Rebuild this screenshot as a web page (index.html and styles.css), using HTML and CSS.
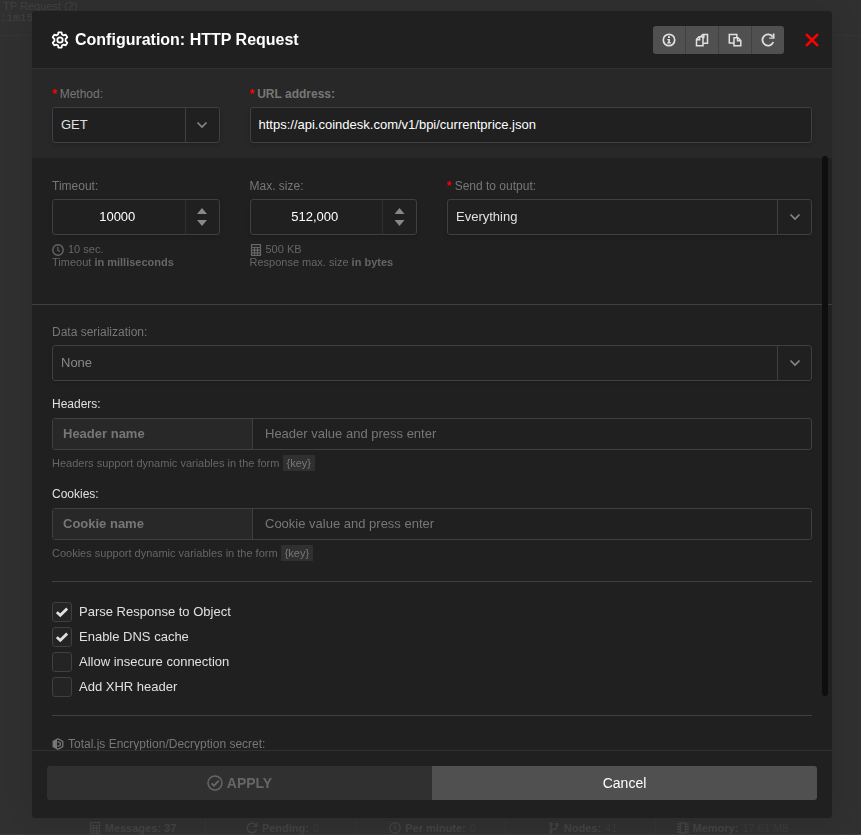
FILE: index.html
```html
<!DOCTYPE html>
<html lang="en">
<head>
<meta charset="utf-8">
<title>Configuration: HTTP Request</title>
<link rel="stylesheet" href="styles.css">
</head>
<body>
<svg class="symbols" aria-hidden="true">
  <symbol id="chevron" viewBox="0 0 12 12"><path d="M1.500 3.500 6 8l4.500-4.500" fill="none" stroke="currentColor" stroke-width="1.600"/></symbol>
  <symbol id="calc" viewBox="0 0 12 12"><path d="M1.500.600h9v10.800h-9zM2 3.500h8M2 6.200h8M2 8.800h8M4.500 4v7M7.500 4v7" fill="none" stroke="currentColor" stroke-width="1.200"/></symbol>
  <symbol id="clock" viewBox="0 0 12 12"><circle cx="6" cy="6" r="5.200" fill="none" stroke="currentColor" stroke-width="1.400"/><path d="M5.800 2.800V6.200l2 1.400" fill="none" stroke="currentColor" stroke-width="1.200"/></symbol>
  <symbol id="reload" viewBox="0 0 14 14"><path d="M11.700 3.800A5.600 5.600 0 1 0 12.300 9" fill="none" stroke="currentColor" stroke-width="1.800"/><path d="M13.500.500v5.300H8.300V4.500h3.500V.500z" fill="currentColor"/></symbol>
  <symbol id="tick" viewBox="0 0 12 12"><path d="M.800 6.200 4.300 9.300 11.200 2.600" fill="none" stroke="currentColor" stroke-width="2.800"/></symbol>
</svg>

<div class="workspace">
  <div class="flow">
    <div class="flow-name">TP Request (2)</div>
    <div class="flow-id">:im15x</div>
  </div>
  <footer class="status">
    <div><svg><use href="#calc"/></svg><b>Messages: 37</b></div>
    <div><svg><use href="#reload"/></svg><b>Pending:</b> <span>0</span></div>
    <div><svg><use href="#clock"/></svg><b>Per minute:</b> <span>0</span></div>
    <div><svg viewBox="0 0 12 12"><g fill="none" stroke="currentColor" stroke-width="1.500"><path d="M3 2.500v7M3 7.500h3c2 0 3-1 3-4"/><circle cx="3" cy="2" r="1"/><circle cx="3" cy="10" r="1"/><circle cx="9" cy="2.500" r="1"/></g></svg><b>Nodes:</b> <span>41</span></div>
    <div><svg viewBox="0 0 12 12"><path d="M3.500 1h5v10h-5zM0 2h3M0 4.700h3M0 7.300h3M0 10h3M9 2h3M9 4.700h3M9 7.300h3M9 10h3" fill="none" stroke="currentColor" stroke-width="1.500"/></svg><b>Memory:</b> <span>17.61 MB</span></div>
  </footer>
</div>

<div class="overlay">
<form class="modal">
  <header class="modal-head">
    <svg class="cog" viewBox="0 0 18 18" fill="none" stroke="currentColor"><path stroke-width="1.800" stroke-linejoin="round" d="M7.400 1.300h3.200l.400 2.200 1.600.900 2.100-.800 1.600 2.700-1.700 1.500v2.400l1.700 1.500-1.600 2.700-2.100-.800-1.600.900-.400 2.200H7.400L7 14.500l-1.600-.900-2.100.800-1.600-2.700 1.700-1.500V7.800L1.700 6.300l1.600-2.700 2.100.800L7 3.500z"/><circle cx="9" cy="9" r="2.700" stroke-width="1.800"/></svg>
    <h1>Configuration: HTTP Request</h1>
    <div class="tools">
      <button type="button" aria-label="Information"><svg viewBox="0 0 14 14"><circle cx="7" cy="7" r="5.700" fill="none" stroke="currentColor" stroke-width="1.700"/><path d="M6 3.300h2v1.700H6zM5.300 6h2.600v3.200h1v1.200H5.200V9.200h1V7.200h-.9z" fill="currentColor"/></svg></button>
      <button type="button" aria-label="Copy"><svg viewBox="0 0 14 14" fill="none" stroke="currentColor" stroke-width="1.500"><path d="M1.500 6.200 4 3.800h4v8.900H1.500z"/><path d="M4.600 4v2.700H1.700"/><path d="M5.700 3.600 7.800 1.500h4.700v8.700H8.200"/><path d="M8.800 1.700v2.800H7.500"/></svg></button>
      <button type="button" aria-label="Paste"><svg viewBox="0 0 14 14" fill="none" stroke="currentColor" stroke-width="1.500"><path d="M6 10H1.300V1.500h7.500V4"/><path d="M6 4.800h4L12.800 7.500v5.300H6z"/><path d="M9.500 4.800v3h3.300"/></svg></button>
      <button type="button" aria-label="Reload"><svg><use href="#reload"/></svg></button>
    </div>
    <button type="button" class="close" aria-label="Close"><svg viewBox="0 0 14 14"><path d="M1.800 1.800l10.400 10.400M12.200 1.800l-10.400 10.400" stroke="currentColor" stroke-width="2.600" stroke-linecap="round"/></svg></button>
  </header>

  <div class="modal-body">
    <section class="panel panel-top grid">
      <div class="field span3">
        <label class="required" for="method">Method:</label>
        <div class="box pick"><select id="method"><option>GET</option></select><span><svg><use href="#chevron"/></svg></span></div>
      </div>
      <div class="field span9">
        <label class="required strong" for="url">URL address:</label>
        <div class="box"><input id="url" type="text" value="https://api.coindesk.com/v1/bpi/currentprice.json"></div>
      </div>
    </section>

    <section class="panel panel-limits grid">
      <div class="field span3">
        <label for="timeout">Timeout:</label>
        <div class="box number"><input id="timeout" type="text" value="10000"><div class="steps"><button type="button" class="up" aria-label="Increase"></button><button type="button" class="down" aria-label="Decrease"></button></div></div>
        <div class="help"><svg><use href="#clock"/></svg>10 sec.<br>Timeout <b>in milliseconds</b></div>
      </div>
      <div class="field span3">
        <label for="size">Max. size:</label>
        <div class="box number"><input id="size" type="text" value="512,000"><div class="steps"><button type="button" class="up" aria-label="Increase"></button><button type="button" class="down" aria-label="Decrease"></button></div></div>
        <div class="help"><svg><use href="#calc"/></svg>500 KB<br>Response max. size <b>in bytes</b></div>
      </div>
      <div class="field span6">
        <label class="required" for="output">Send to output:</label>
        <div class="box pick"><select id="output"><option>Everything</option></select><span><svg><use href="#chevron"/></svg></span></div>
      </div>
    </section>

    <section class="panel panel-data">
      <div class="field">
        <label for="serial">Data serialization:</label>
        <div class="box pick muted"><select id="serial"><option>None</option></select><span><svg><use href="#chevron"/></svg></span></div>
      </div>
      <div class="pairs">
        <label for="hname">Headers:</label>
        <div class="pair"><input id="hname" type="text" placeholder="Header name"><input type="text" aria-label="Header value" placeholder="Header value and press enter"></div>
        <p>Headers support dynamic variables in the form <code>{key}</code></p>
      </div>
      <div class="pairs">
        <label for="cname">Cookies:</label>
        <div class="pair"><input id="cname" type="text" placeholder="Cookie name"><input type="text" aria-label="Cookie value" placeholder="Cookie value and press enter"></div>
        <p>Cookies support dynamic variables in the form <code>{key}</code></p>
      </div>
      <hr>
      <div class="checks">
        <label><input type="checkbox" checked><svg><use href="#tick"/></svg>Parse Response to Object</label>
        <label><input type="checkbox" checked><svg><use href="#tick"/></svg>Enable DNS cache</label>
        <label><input type="checkbox"><svg><use href="#tick"/></svg>Allow insecure connection</label>
        <label><input type="checkbox"><svg><use href="#tick"/></svg>Add XHR header</label>
      </div>
      <hr>
      <div class="field secret">
        <label for="secret"><svg viewBox="0 0 12 12"><path d="M6 .800 10.800 3.400v5.200L6 11.200 1.200 8.600V3.400z" fill="none" stroke="currentColor" stroke-width="1.300"/><path d="M1 3.400 5 1.200v9.600L1 8.600z" fill="currentColor"/><path d="M5.500 3.500 8.300 5v2L5.500 8.500" fill="none" stroke="currentColor" stroke-width="1.300"/></svg>Total.js Encryption/Decryption secret:</label>
        <div class="box"><input id="secret" type="text"></div>
      </div>
    </section>
    <div class="scrollbar"></div>
  </div>

  <footer class="modal-foot">
    <button type="submit" class="apply" disabled><svg viewBox="0 0 16 16" fill="none" stroke="currentColor" stroke-width="1.500"><circle cx="8" cy="8" r="7"/><path d="M4.500 8.300 7 10.700l4.800-5" stroke-width="1.800"/></svg>APPLY</button>
    <button type="button" class="cancel">Cancel</button>
  </footer>
</form>
</div>
</body>
</html>
```

FILE: styles.css
```css
* { box-sizing: border-box; }

html, body { height: 100%; }

body {
  margin: 0;
  background: #303030;
  color: #e0e0e0;
  font: 13px/16px "Liberation Sans", Arial, sans-serif;
  overflow: hidden;
}

h1, p { margin: 0; }

button, input, select {
  margin: 0;
  padding: 0;
  border: 0;
  border-radius: 0;
  background: none;
  color: inherit;
  font: inherit;
  outline: 0;
}

select { appearance: none; }

svg { width: 12px; height: 12px; flex: none; }

.symbols { position: absolute; width: 0; height: 0; }

/* Dimmed workspace behind the dialog */
.workspace {
  height: 100%;
  display: flex;
  flex-direction: column;
  justify-content: space-between;
  color: #424242;
  font-size: 11px;
  line-height: 14px;
}

.flow { height: 36px; border-bottom: 1px solid #343434; line-height: 12px; }
.flow-name { padding-left: 3px; }
.flow-id { font-family: "Liberation Mono", monospace; }

.status {
  display: flex;
  justify-content: center;
  border-bottom: 1px solid #3a3a3a;
}

.status div {
  width: 150px;
  height: 16px;
  display: flex;
  align-items: center;
  justify-content: center;
  gap: 4px;
  border-right: 1px solid #343434;
  padding: 3px 0 0 5px;
}

.status div:last-child { border: 0; }
.status span { color: #3a3a3a; }

/* Dialog */
.overlay {
  position: fixed;
  inset: 0;
  display: flex;
  padding: 11px 29px 17px 32px;
}

.modal {
  flex: 1;
  min-width: 0;
  display: flex;
  flex-direction: column;
  background: #202020;
  border-radius: 3px;
  overflow: hidden;
  box-shadow: 0 0 30px rgba(0, 0, 0, .1);
}

.modal-head {
  display: flex;
  align-items: center;
  height: 58px;
  padding: 0 12px 0 19px;
  border-bottom: 1px solid #303030;
  color: #fff;
}

.cog { width: 18px; height: 18px; margin-right: 6px; }

h1 { flex: 1; font-size: 16px; line-height: 20px; }

.tools {
  display: flex;
  border-radius: 3px;
  overflow: hidden;
  background: #505050;
  color: #e0e0e0;
}

.tools button {
  width: 33px;
  height: 28px;
  display: grid;
  place-items: center;
  border-right: 1px solid #404040;
}

.tools button:last-child { width: 32px; border: 0; }
.tools svg, .close svg { width: 14px; height: 14px; }

.close {
  width: 16px;
  height: 28px;
  margin-left: 20px;
  display: grid;
  place-items: center;
  color: #f00;
}

.modal-body {
  flex: 1;
  min-height: 0;
  position: relative;
  overflow: hidden;
}

.scrollbar {
  position: absolute;
  top: 87px;
  right: 4px;
  bottom: 54px;
  width: 6px;
  border-radius: 3px;
  background: #0e0e0e;
}

.panel { padding: 19px 20px; }
.panel-top { background: #282828; padding: 17px 20px 15px; }
.panel-limits { padding: 20px 20px 35px; border-bottom: 1px solid #404040; }

.grid {
  display: grid;
  grid-template-columns: repeat(12, minmax(0, 1fr));
  column-gap: 30px;
}

.span3 { grid-column: span 3; }
.span6 { grid-column: span 6; }
.span9 { grid-column: span 9; }

/* Fields */
.field label {
  display: flex;
  align-items: center;
  margin-bottom: 5px;
  color: #777;
  font-size: 12px;
}

.field .strong { font-weight: bold; }

.required::before {
  content: "*";
  margin-right: 3px;
  color: #f00;
  font-weight: bold;
}

.box {
  display: grid;
  height: 36px;
  border: 1px solid #404040;
  border-radius: 3px;
  background: #202020;
  box-shadow: 0 2px 4px rgba(0, 0, 0, .15);
}

.box input, .box select { width: 100%; min-width: 0; padding: 0 8px; }
.box input { color: #fff; }

.pick select, .pick span { grid-area: 1 / 1; }
.muted { color: #888; }

.pick span {
  justify-self: end;
  width: 34px;
  display: grid;
  place-items: center;
  border-left: 1px solid #404040;
  color: #888;
  pointer-events: none;
}

.number { grid-template-columns: 1fr 34px; }
.box.number input { padding-right: 11px; text-align: center; }

.steps {
  display: flex;
  flex-direction: column;
  align-items: center;
  justify-content: center;
  gap: 6px;
  border-left: 1px solid #303030;
}

.steps button {
  width: 10px;
  height: 6px;
  background: #888;
  clip-path: polygon(50% 0, 100% 100%, 0 100%);
}

.steps .down { clip-path: polygon(0 0, 100% 0, 50% 100%); }

.help {
  margin-top: 8px;
  color: #666;
  font-size: 11px;
  line-height: 13px;
}

.help svg { margin-right: 4px; vertical-align: -3px; }

/* Name and value pairs */
.pairs { margin-top: 15px; }
.pairs label { display: block; color: #e0e0e0; font-size: 12px; }

.pair {
  display: flex;
  height: 32px;
  margin: 6px 0;
  border: 1px solid #404040;
  border-radius: 3px;
  overflow: hidden;
}

.pair input { flex: 1; min-width: 0; padding: 0 12px; }

.pair input:first-child {
  flex: 0 0 200px;
  padding: 0 10px;
  border-right: 1px solid #404040;
  background: #282828;
  font-weight: bold;
}

.pair input::placeholder { color: #777; opacity: 1; }

.pairs p { color: #666; font-size: 11px; line-height: 15px; }

code {
  padding: 2px 4px;
  background: #303030;
  color: #777;
  font: inherit;
}

hr {
  margin: 18px 0 20px;
  border: 0;
  border-top: 1px solid #404040;
}

.pairs + hr { margin-top: 20px; }

/* Options */
.checks { display: grid; gap: 5px; }

.checks label {
  display: grid;
  grid-template-columns: 20px 1fr;
  align-items: center;
  column-gap: 7px;
}

.checks input {
  appearance: none;
  grid-area: 1 / 1;
  width: 20px;
  height: 20px;
  border: 1px solid #404040;
  border-radius: 3px;
  background: #242424;
}

.checks svg { grid-area: 1 / 1; justify-self: center; }
.checks input:not(:checked) + svg { visibility: hidden; }

.secret svg { margin-right: 4px; }

/* Actions */
.modal-foot {
  display: flex;
  padding: 15px 15px 18px;
  border-top: 1px solid #303030;
}

.modal-foot button {
  flex: 1;
  height: 34px;
  display: flex;
  align-items: center;
  justify-content: center;
  gap: 4px;
  font-size: 14px;
}

.modal-foot svg { width: 16px; height: 16px; }

.apply {
  border-radius: 3px 0 0 3px;
  background: #303030;
  color: #666;
}

.modal-foot .apply { font-weight: bold; }

.cancel {
  border-radius: 0 3px 3px 0;
  background: #505050;
  color: #fff;
}
```
